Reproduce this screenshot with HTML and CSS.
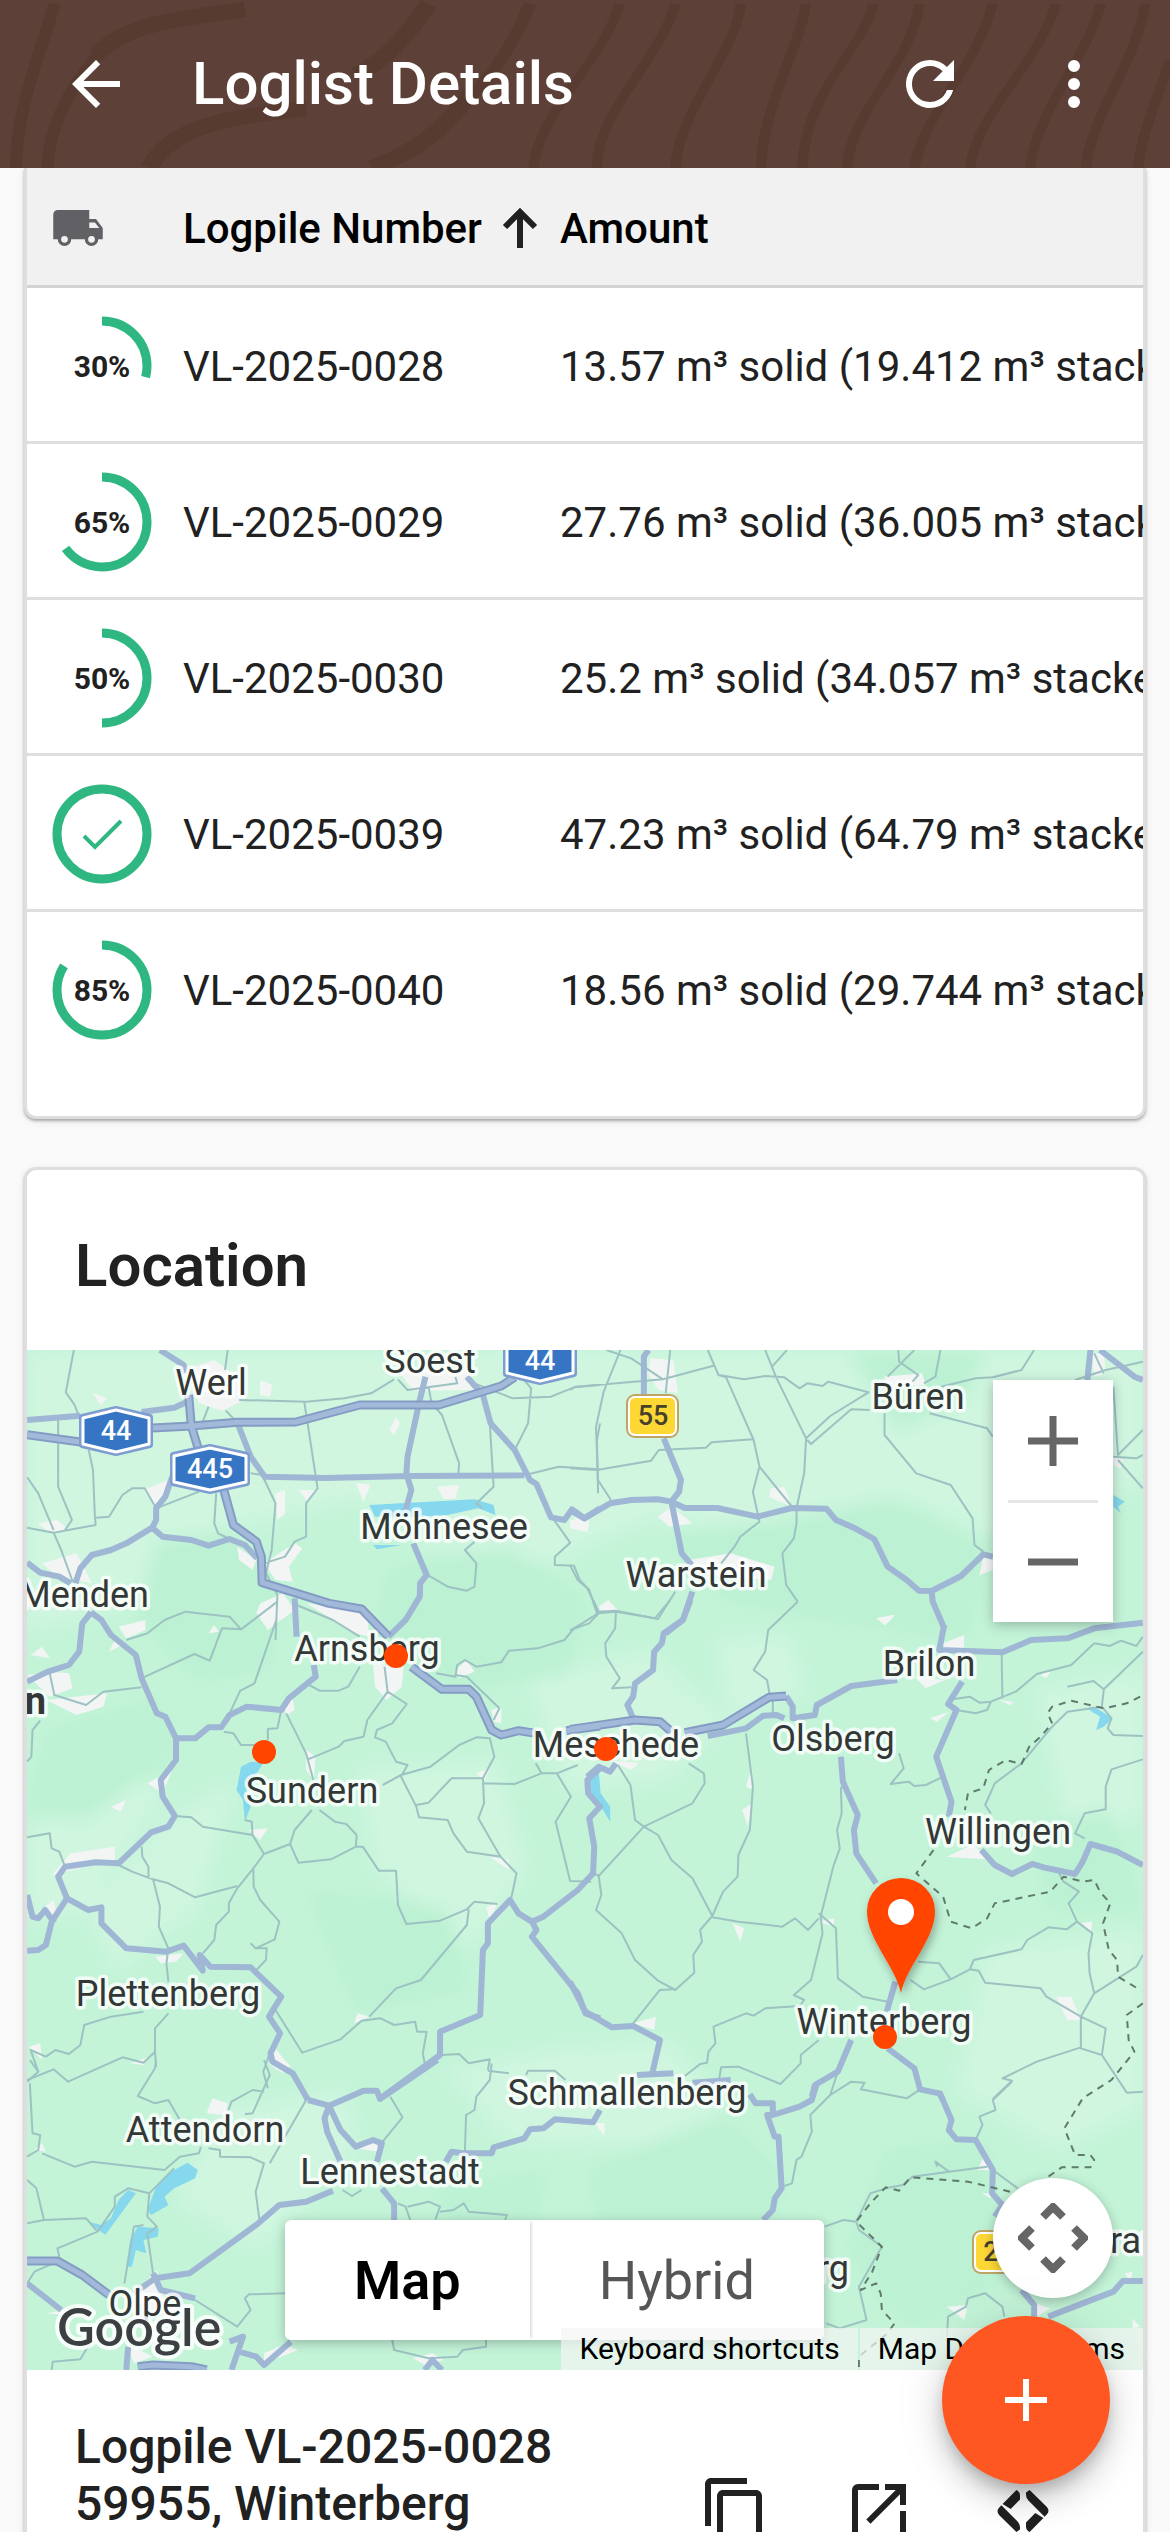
FILE: index.html
```html
<!DOCTYPE html>
<html lang="en">
<head>
<meta charset="utf-8">
<meta name="viewport" content="width=device-width, initial-scale=1">
<title>Loglist Details</title>
<link rel="stylesheet" href="styles.css">
</head>
<body>
<header class="topbar">
  <svg class="topbar-grain" viewBox="0 0 1170 168" preserveAspectRatio="xMidYMid slice" aria-hidden="true">
    <g transform="scale(.3827 .3333)">
      <path class="medium" d="M142 12C110 150 42 320 42 504"/>
      <path class="medium" d="M290 130C190 230 128 380 124 504"/>
      <path class="wide" d="M640 28C500 55 340 60 250 165"/>
      <path class="wide" d="M1120 12C1060 110 1010 180 930 225"/>
      <path class="wide" d="M800 325C620 350 450 370 390 504"/>
      <path class="wide" d="M1230 280C1160 390 1080 460 970 504"/>
      <path class="medium" d="M1385 12C1350 110 1300 210 1230 290"/>
    </g>
    <g transform="scale(.7462 .3333)">
      <path d="M830 12C810 180 720 340 715 504M905 12C880 200 800 330 800 504M993 12C985 160 910 330 905 504M1080 12C1075 120 1020 330 1020 504M1170 12C1160 140 1080 260 1075 504M1232 12C1220 200 1140 330 1135 504M1330 12C1310 200 1240 330 1225 504M1415 12C1390 200 1310 330 1300 504M1475 12C1460 160 1390 330 1380 504M1535 12C1520 200 1465 330 1455 504M1568 180C1550 300 1530 400 1525 504"/>
    </g>
  </svg>
  <button class="icon-button" type="button" aria-label="Back"><svg viewBox="0 0 24 24"><path d="M20 11H7.83l5.59-5.59L12 4l-8 8 8 8 1.41-1.41L7.83 13H20v-2z"/></svg></button>
  <h1>Loglist Details</h1>
  <div class="topbar-actions">
    <button class="icon-button" type="button" aria-label="Refresh"><svg viewBox="0 0 24 24"><path d="M17.65 6.35A7.96 7.96 0 0 0 12 4a8 8 0 1 0 7.73 10h-2.08A6 6 0 1 1 12 6c1.66 0 3.14.69 4.22 1.78L13 11h7V4l-2.35 2.35z"/></svg></button>
    <button class="icon-button" type="button" aria-label="More"><svg viewBox="0 0 24 24"><path d="M12 8a2 2 0 1 0 0-4 2 2 0 0 0 0 4zm0 2a2 2 0 1 0 0 4 2 2 0 0 0 0-4zm0 6a2 2 0 1 0 0 4 2 2 0 0 0 0-4z"/></svg></button>
  </div>
</header>

<main class="content">
  <section class="card card-table">
    <table>
      <thead>
        <tr>
          <th class="col-state" aria-label="Transport"><svg class="truck" viewBox="0 0 24 24"><path d="M20 8h-3V4H3c-1.100 0-2 .9-2 2v11h2a3 3 0 0 0 6 0h6a3 3 0 0 0 6 0h2v-5l-3-4zM6 18.500a1.500 1.500 0 1 1 0-3 1.500 1.500 0 0 1 0 3zm13.500-9 1.960 2.500H17V9.500h2.500zm-1.500 9a1.500 1.500 0 1 1 0-3 1.500 1.500 0 0 1 0 3z"/></svg></th>
          <th class="col-number"><span class="sorted">Logpile Number <svg class="sort" viewBox="0 0 36 40"><path d="M18 40V4M3 19 18 4l15 15"/></svg></span></th>
          <th>Amount</th>
        </tr>
      </thead>
      <tbody>
        <tr><td><div class="ring"><svg viewBox="0 0 102 102"><circle cx="51" cy="51" r="45" pathLength="100" stroke-dasharray="29 100"/></svg><span>30%</span></div></td><td>VL-2025-0028</td><td>13.57 m³ solid (19.412 m³ stacked)</td></tr>
        <tr><td><div class="ring"><svg viewBox="0 0 102 102"><circle cx="51" cy="51" r="45" pathLength="100" stroke-dasharray="65 100"/></svg><span>65%</span></div></td><td>VL-2025-0029</td><td>27.76 m³ solid (36.005 m³ stacked)</td></tr>
        <tr><td><div class="ring"><svg viewBox="0 0 102 102"><circle cx="51" cy="51" r="45" pathLength="100" stroke-dasharray="50 100"/></svg><span>50%</span></div></td><td>VL-2025-0030</td><td>25.2 m³ solid (34.057 m³ stacked)</td></tr>
        <tr><td><div class="ring"><svg viewBox="0 0 102 102" role="img" aria-label="Complete"><circle cx="51" cy="51" r="45"/><path d="M33 53 44 64 70 38"/></svg></div></td><td>VL-2025-0039</td><td>47.23 m³ solid (64.79 m³ stacked)</td></tr>
        <tr><td><div class="ring"><svg viewBox="0 0 102 102"><circle cx="51" cy="51" r="45" pathLength="100" stroke-dasharray="84 100"/></svg><span>85%</span></div></td><td>VL-2025-0040</td><td>18.56 m³ solid (29.744 m³ stacked)</td></tr>
      </tbody>
    </table>
  </section>

  <section class="card">
    <h2>Location</h2>
    <div class="map">
      <svg class="map-canvas" viewBox="0 0 1116 1020" preserveAspectRatio="xMidYMid slice" role="img" aria-label="Map of the Sauerland region">
        <defs>
          <filter id="soft" x="-10%" y="-10%" width="120%" height="120%"><feGaussianBlur stdDeviation="9"/></filter>
          <filter id="drop" x="-30%" y="-30%" width="160%" height="160%"><feDropShadow dx="2" dy="5" stdDeviation="5" flood-opacity=".3"/></filter>
        </defs>
        <rect class="land" width="1116" height="1020"/>
        <g class="light">
          <path d="M0 0H1116V130L1000 200L880 150L780 190L620 170L520 215L400 200L330 150L190 180L140 250L0 280Z"/>
          <path d="M500 330L620 300L700 370L640 430L540 440Z"/><path d="M690 290L760 285L780 340L700 370Z"/>
          <path d="M60 560L140 470L210 430L170 560L90 620Z"/><path d="M0 480L90 420L140 440L60 560L0 570Z"/>
          <path d="M960 600L1116 580V760L1030 800L930 740Z"/><path d="M420 720L520 700L640 690L700 760L620 800L480 790Z"/>
          <path d="M330 420L470 410L500 520L440 600L350 520Z"/><path d="M190 760L320 740L330 800L230 900L150 850Z"/>
          <path d="M1010 340L1116 320V470L1040 480Z"/>
        </g>
        <g class="dark">
          <path d="M130 190L200 185L260 240L240 320L170 330L110 270Z"/><path d="M360 220L480 200L560 250L540 320L430 340L350 290Z"/>
          <path d="M640 190L860 150L960 200L940 290L800 270L700 250Z"/><path d="M820 0H960L940 50L870 80Z"/>
          <path d="M20 380L130 350L150 400L60 470L0 460Z"/><path d="M560 820L700 770L760 830L720 930L580 900Z"/>
          <path d="M860 800L960 790L980 930L880 980L820 900Z"/><path d="M410 840L520 820L500 900L420 890Z"/>
          <path d="M280 540L420 560L440 640L330 660Z"/><path d="M1010 480L1080 460L1116 560L1020 560Z"/>
        </g>

        <g class="town">
          <g transform="translate(-27 -210) scale(.38265 .33333)">
            <path d="M480 690L560 660L630 720L640 780L580 812L520 790ZM1040 690L1220 690L1240 750L1080 752ZM243 760L280 775L262 795ZM680 720L712 735L705 770L680 765ZM1035 830L1045 850L1030 885L1018 870ZM930 1028L968 1035L950 1085ZM1142 1040L1200 1035L1190 1075L1160 1078ZM720 1060L745 1050L745 1120L725 1140ZM780 1050L830 1050L805 1085ZM375 1050L440 1020L435 1070L400 1095ZM100 1150L150 1140L180 1170L130 1180ZM110 1270L200 1240L240 1330L150 1310ZM690 1270L770 1210L790 1225L755 1280L765 1325L720 1320ZM620 1220L670 1260L660 1290L625 1260ZM680 1390L740 1360L770 1410L700 1470L670 1420ZM800 1390L960 1420L965 1490L930 1480ZM310 1460L380 1440L380 1470L330 1495ZM1490 1140L1540 1140L1530 1175L1490 1165Z"/>
          </g>
          <g transform="translate(543 -210) scale(.38265 .33333)">
            <path d="M210 655L270 660L282 760L230 750L205 700ZM820 710L920 700L930 735L830 740ZM525 1045L560 1040L580 1100L520 1070ZM230 1130L265 1100L320 1150L260 1160ZM310 1260L420 1240L535 1280L525 1320L320 1300ZM75 1400L100 1380L120 1410L90 1420ZM805 1435L850 1425L825 1455ZM1080 1250L1105 1260L1105 1290L1070 1305ZM1420 945L1445 960L1440 985L1420 975ZM1365 640L1395 640L1400 700L1370 710ZM0 1160L20 1120L50 1150L45 1175Z"/>
          </g>
          <g transform="translate(-27 250) scale(.38265 .33333)">
            <path d="M71 225L130 215L180 220L190 265L130 290ZM120 300L280 280L270 320L200 345ZM80 165L110 140L130 175ZM285 155L300 120L330 130ZM545 100L560 75L572 95ZM975 190L1055 200L1050 260L1010 300L980 260ZM740 320L765 295L770 330L750 345ZM385 550L450 510L425 580ZM290 620L330 600L315 635ZM185 760L300 740L300 780L135 825ZM100 935L140 900L150 950ZM650 690L700 685L680 720ZM800 450L825 470L820 540L800 510ZM1190 210L1220 180L1240 215L1200 235ZM1285 330L1310 320L1310 370L1290 365ZM1245 520L1280 505L1265 545ZM1280 770L1330 780L1330 810ZM405 1070L480 1060L460 1085L420 1090ZM925 1270L935 1240L965 1250ZM340 1390L390 1370L375 1395ZM715 1340L760 1400L720 1410ZM75 1340L105 1330L110 1380ZM1270 920L1300 910L1280 960Z"/>
          </g>
          <g transform="translate(543 250) scale(.38265 .33333)">
            <path d="M975 130L1030 105L1030 150L980 150ZM900 230L980 240L930 265ZM1230 225L1260 205L1245 235ZM940 355L990 335L960 365ZM1120 300L1160 305L1150 315ZM460 560L475 500L480 570ZM450 630L475 610L465 680ZM985 770L1050 735L1110 780ZM425 970L455 985L445 1025ZM650 965L690 955L690 980ZM1270 1190L1310 1190L1335 1260L1300 1260ZM165 1270L225 1250L220 1290ZM100 480L180 490L160 510ZM800 55L845 45L822 75ZM75 30L100 0L125 30ZM1330 970L1365 965L1360 1000Z"/>
          </g>
          <g transform="translate(-27 710) scale(.38265 .33333)">
            <path d="M540 160L555 115L595 130L590 165ZM90 270L110 250L120 275ZM930 265L980 240L990 275ZM350 700L410 630L430 720L470 750L390 770ZM330 850L400 890L350 910ZM690 880L740 855L780 870L690 910ZM1080 895L1130 880L1160 900L1110 915ZM700 10L745 10L740 40ZM120 760L200 745L240 770Z"/>
          </g>
          <g transform="translate(543 710) scale(.38265 .33333)">
            <path d="M65 190L90 190L90 228ZM1065 330L1085 280L1105 330ZM985 740L1040 735L1030 780ZM1215 730L1255 745L1220 770ZM1450 640L1470 635L1465 665ZM1470 775L1490 800L1470 805ZM1075 400L1105 400L1100 415Z"/>
          </g>
        </g>

        <g class="water">
          <path transform="translate(-27 -210) scale(.38265 .33333)" d="M965 1095L1240 1078L1290 1095L1295 1125L1250 1105L1170 1125L1110 1130L980 1130ZM975 1215L1050 1215L985 1228Z"/>
          <path transform="translate(543 -210) scale(.38265 .33333)" d="M1420 1065L1450 1085L1432 1100L1440 1120L1420 1100Z"/>
          <path transform="translate(-27 250) scale(.38265 .33333)" d="M690 485L665 530L640 580L655 620L640 665L635 600L618 570L630 500L655 485Z"/>
          <path transform="translate(543 250) scale(.38265 .33333)" d="M75 510L80 580L105 620L105 665L70 600L45 560L55 520ZM1370 320L1418 355L1395 380L1375 390L1385 350L1350 325Z"/>
          <path transform="translate(-27 710) scale(.38265 .33333)" d="M490 308L517 330L510 355L455 385L430 410L440 435L395 465L385 450L410 375L440 340ZM335 390L355 400L275 525L230 485L265 495L290 475L310 420ZM360 500L415 505L412 530L375 540L382 580L355 570L345 620L330 620L340 540Z"/>
        </g>

        <g class="minor">
          <path transform="translate(-27 -210) scale(.38265 .33333)" d="M193 630L172 757L195 795L205 825M232 930L243 990L248 1130M152 840L152 1040L188 1140L170 1170M71 1012L100 1060L140 1170M250 1133L285 1130L320 1065L345 1045L378 1045L408 1105M71 1163L140 1178L250 1155L248 1130M140 1178L160 1230L190 1325M595 630L588 690M530 845L545 800M590 812L620 847M625 780L800 785L900 775L970 760L1030 718M795 785L830 1045L800 1090L800 1190L770 1205L745 1250L690 1270M565 1060L560 1150L570 1180L600 1197M408 1105L520 1055M655 1000L685 1005L720 1090L710 1230L695 1300L725 1365M1120 740L1128 790L1155 825L1200 970L1197 1010M1040 718L1065 750L1195 730L1190 710M1280 850L1290 1040L1245 1090L1260 1105M1240 730L1340 775L1440 770L1500 742L1568 735M1370 720L1388 745L1380 850L1345 930M1370 1006L1460 980L1568 988M1568 850L1560 900L1563 1060M1445 1135L1490 1208L1450 1250L1450 1275L1500 1277L1515 1320L1540 1350L1560 1420M1240 1205L1215 1230L1245 1270L1240 1340L1220 1352L1170 1340L1118 1305M725 1365L720 1500M775 1395L870 1440L940 1490"/>
          <path transform="translate(543 -210) scale(.38265 .33333)" d="M132 630L88 755L68 860L73 1020L107 1080M0 750L15 740L243 718L375 677M95 630L160 655L243 718M262 630L250 760M360 630L388 705L408 712L480 900L495 980L583 1104M388 705L455 718L510 708L560 712L600 745L620 730L660 738L675 725L780 757L680 828L617 895M510 630L540 715L617 895L612 1000L592 1104L592 1150L585 1195L555 1240L565 1335L595 1385M567 630L528 680M783 810L735 808L630 912L620 900M0 985L70 990L212 962L232 930L355 923L370 907L478 898M495 980L478 1055L495 1145L445 1190L430 1220L395 1270M275 1355L230 1437L120 1412L75 1415L45 1345L20 1320L0 1275M822 820L822 885L905 1000L995 1035L1052 1135L1057 1215L1080 1235M940 820L1090 865L1105 890M858 630L860 665L910 705L895 725M900 630L830 710M968 630L955 710L925 730M970 740L1060 715L1105 712L1180 690L1213 630M1420 740L1432 945L1497 870M1420 950L1480 955L1497 945M1432 960L1497 1045M1320 720L1400 690L1497 665M1370 640L1395 700"/>
          <path transform="translate(-27 250) scale(.38265 .33333)" d="M330 120L385 100L430 60L485 35L600 50L630 88L725 5M630 88L580 85L548 182L508 162L375 232M722 60L665 250L628 272L600 340M130 220L142 285L225 315L270 275L370 262M71 485L82 470L85 390L105 362M585 395L610 400L630 435L690 435M735 330L725 385L700 387L700 420M748 340L800 460L820 545M805 478L885 440L900 423L950 410L960 360L1013 275L1063 312L1025 370L985 390L980 412L1008 425L1035 485L1065 495L1048 530L1088 620L1095 652L1170 660L1185 700L1220 755L1310 770M1013 275L1005 200M940 200L910 260L885 272L835 272L808 255M1000 555L1048 525L1125 500L1200 435L1245 412L1280 415L1292 470L1262 535L1265 610L1250 655L1308 770L1350 820L1335 900M1088 615L1120 608L1180 535L1262 535M1262 550L1345 552L1415 520L1455 520L1510 495M1400 490L1415 520M1455 520L1492 590L1452 665L1490 843L1545 845M1140 220L1190 230L1195 195L1215 180L1245 200L1310 187L1330 152L1405 145L1475 120L1500 85L1563 40L1550 0M1190 225L1220 230L1305 325L1290 360M457 648L500 652L530 680L660 705M640 660L658 665L660 705L690 762L758 732L770 690L815 630M835 630L875 665L905 672L932 705L930 740L865 778L780 788L758 732M930 740L948 740L990 812L1035 812L1040 915L1062 972L1150 962L1220 928L1240 905L1300 912M1225 928L1220 975L1100 1140L1035 1165L965 1250M690 762L662 805L663 860L680 900L730 965L718 1018L668 1045L655 1030M662 805L620 865L598 910L598 935L565 975L560 1020L530 1060M310 795L345 815L400 838L440 850L510 892L620 858M370 740L372 770L388 800L388 835M400 838L418 920L415 980L440 1045L435 1090L440 1145M71 712L130 700L135 745L155 755L170 800M668 1045L697 1045L695 1080L670 1110M720 1230L790 1358L890 1318L945 1262L995 1255L1030 1275L1085 1265L1090 1295L1115 1295L1105 1360L1110 1390M1155 1365L1200 1362L1225 1390L1280 1378L1275 1410M1275 1412L1330 1420M375 1235L290 1250L220 1275L210 1335L180 1362L145 1350L120 1370L80 1350L100 1415M440 1240L405 1285L405 1355L375 1388L320 1372L178 1445L140 1408L71 1440M405 1355L408 1400M705 1360L688 1415L700 1465"/>
          <path transform="translate(543 250) scale(.38265 .33333)" d="M595 5L518 90L510 155L480 210L515 240L522 285M530 300L530 345M75 40L120 35L222 55L262 0M75 40L60 0M0 90L50 70L75 40M120 35L118 85L92 130L95 170L130 235L110 265L160 262M125 495L158 555L170 660L193 680L320 610L352 550L350 520L310 490M193 680L75 828L82 885L68 930L135 1000L170 1080L230 1142L275 1170L325 1118L322 1065L345 1025L340 990L372 948L400 875L438 830L440 765L470 690L478 560L460 400M193 680L230 705L265 780L320 835L372 948M62 820L75 828M372 952L440 965L555 980L588 955L622 990L650 955M708 560L710 640L698 690L705 745L688 800L655 950L660 1000L630 1140L585 1185L612 1200L600 1218L510 1225L480 1247L460 1240L375 1280L380 1330L362 1355L358 1388L340 1392L300 1428M650 940L695 985L700 1135L765 1190L830 1205M270 1168L235 1170L165 1270M390 1435L395 1402L440 1400L550 1452L603 1390L603 1365L650 1320M860 460L872 505L838 552L885 545L900 558L930 555L975 530M1000 298L1045 290L1070 308L1100 305L1165 275L1220 222L1310 195L1370 130L1410 138L1440 122L1480 138L1497 110M1128 160L1130 295M1010 330L1060 340L1090 330L1100 305M1300 260L1368 243L1395 268L1497 155M1395 268L1390 320L1415 355L1405 385L1420 405L1497 408M1390 320L1300 335L1260 380L1180 490L1110 550L1085 615L1100 640M1497 478L1415 508L1400 560L1400 628L1345 640L1320 700L1345 715M1278 820L1290 845L1330 875L1303 910L1325 965L1365 1000L1355 1060L1358 1120L1370 1180L1335 1250L1335 1345L1390 1365L1400 1285L1335 1250M1370 1180L1480 1100L1497 1065M1325 965L1298 988L1250 982L1195 1020L1180 1048L1055 1080L1045 1108L995 1138L925 1168L890 1140M910 1085L965 1090L995 1138M1045 1108L1068 1112L1085 1148L1230 1165L1245 1190L1335 1250M1335 1342L1220 1385L1130 1435L1155 1442L1105 1497M1390 1365L1455 1478L1497 1475"/>
          <path transform="translate(-27 710) scale(.38265 .33333)" d="M78 0L100 35L71 65M408 0L405 25L360 108L405 130L440 120L470 180M78 70L85 220L105 225L100 270L71 290M110 280L195 320L240 305L430 330L470 290L520 280L525 260M690 0L705 45L660 160L640 163M690 95L660 90L605 125L597 150M800 120L705 310M545 265L575 270L575 290L655 292L690 310L668 395L678 480M71 360L95 385L115 480L225 475L255 515L150 565L155 590M71 490L115 480M255 515L300 440L300 410L335 385L390 400L455 325M390 400L385 470L410 500L385 520L400 640M375 495L350 500L325 670M1020 110L1052 172L1000 245M1285 10L1280 60L1245 110L1240 150L1218 165L1215 275M1065 440L1120 425L1150 440L1138 478M1040 430L1060 440L1072 480M1150 455L1185 450L1212 430L1225 455L1325 465L1320 480M745 700L650 703L640 715L655 750L620 800L510 720M71 670L90 635L150 605M135 930L138 905L210 898L235 850M1025 840L1030 870L1120 895L1195 890L1210 870L1270 860L1270 840M895 390L920 408L945 390M1375 45L1380 32L1450 32L1478 60"/>
          <path transform="translate(543 710) scale(.38265 .33333)" d="M700 35L680 105L735 65L770 68L760 88L880 115L915 88M1155 65L1105 120L1112 150L1070 170L1078 195L1060 240M680 105L628 165L632 215L605 290L592 300L580 370L560 378M665 500L715 480L748 485L785 400L825 385L870 375L895 350L990 335L1090 320M990 335L955 305L960 320M1105 330L1170 385M748 485L755 510L815 560L755 680L775 780L705 805L670 790M985 830L988 770L1035 740L1040 715L1085 700L1130 740L1135 770"/>
        </g>

        <g class="major">
          <path transform="translate(-27 -210) scale(.38265 .33333)" d="M418 630L480 675L482 700M71 840L210 827M370 816L455 803L490 785M620 847L655 950L692 1010L850 1014L1070 1008L1370 1006M450 1010L432 1070L408 1105L408 1140L398 1163L330 1210L290 1230L240 1245L210 1285L197 1330M398 1163L425 1190L500 1200L545 1217L600 1197L640 1215L672 1255M71 1268L105 1298L155 1310L185 1330M770 1375L775 1490M1112 710L1095 790L1065 950L1062 1000L1075 1050L1060 1110M1080 1210L1115 1305L1098 1330L1097 1370L1060 1440L1015 1490M1220 710L1262 765L1282 850L1345 930L1385 1020L1402 1032L1440 1132L1475 1140L1495 1108L1528 1135L1568 1105"/>
          <path transform="translate(543 -210) scale(.38265 .33333)" d="M205 630L193 650L193 765M245 895L290 1020L285 1055L265 1085L230 1078L160 1080L105 1090L37 1135L0 1110M265 1085L300 1104L385 1104L490 1130L580 1104L670 1106L695 1140L745 1165L795 1197L830 1280L880 1320L912 1352L945 1353L1022 1308L1080 1243L1105 1250M265 1085L292 1240L318 1275M320 1355L295 1440L250 1480M945 1353L948 1385L978 1465M1360 630L1352 720M1385 630L1475 710L1497 720"/>
          <path transform="translate(-27 250) scale(.38265 .33333)" d="M238 37L215 70L207 155L180 195L125 215L71 245M238 37L265 60L290 105L355 165L370 235L410 340L432 350L460 415L460 480L420 540L425 590L457 648L440 680L395 697L310 790L250 787L170 800L152 830L175 895L135 965L120 1035L100 1050L71 1052M175 895L230 930L265 922L265 970L330 1045L435 1055L480 1037L530 1112L522 1065L550 1100L655 1102L735 1190L703 1250L732 1300L707 1360L712 1385L765 1420L805 1500M71 885L85 950L100 955L118 930L142 968M460 415L510 415L545 382L578 382L600 345L645 320L735 330L755 295L825 230L820 195M1568 505L1535 540L1537 580L1568 620L1540 655L1553 740L1550 820L1510 870L1420 950L1390 965L1355 940L1333 900L1275 970L1275 1030L1262 1050L1255 1245L1150 1295L1150 1365L1000 1490M1390 965L1402 990L1390 1010L1510 1180L1530 1240L1568 1255"/>
          <path transform="translate(543 250) scale(.38265 .33333)" d="M978 75L965 150L1130 157L1205 120L1300 115L1370 85L1497 68M315 0L295 60L245 100L240 130L220 155L217 210L170 250L165 290L150 315L165 355M360 408L460 385L505 347L540 345L560 355M565 288L582 320L582 355L640 345L645 315L735 258L855 240M1025 245L988 312L1010 330L957 470L997 605L990 650M708 470L713 545L752 645L742 690L748 760L800 850M1075 750L1110 795L1155 822L1208 792L1240 803L1320 822L1340 785L1360 732L1430 755L1497 795M850 1145L828 1235M735 1320L700 1415L640 1455L632 1490M830 1345L900 1405L915 1468L965 1480L975 1500M120 490L105 515L75 500L45 530M0 1145L40 1235L110 1282L165 1278L235 1320L215 1420M175 1425L270 1420"/>
          <path transform="translate(-27 710) scale(.38265 .33333)" d="M805 120L860 137L950 92L985 92L993 117L1143 0M860 137L848 175L855 215L890 305M860 137L890 210L930 260L975 240L998 250L985 305M870 392L800 425L730 435L675 490L495 640L405 655L350 700M71 670L160 750M400 640L420 690L510 715M335 860L330 930M605 930L635 830L600 845M625 875L670 890L690 915L760 845M998 385L1030 430L1030 480M1165 305L1180 275L1210 280L1285 280L1290 262L1370 235L1385 208L1420 205L1450 178L1550 187L1568 150M800 110L805 120M1110 930L1130 900L1155 930"/>
          <path transform="translate(543 710) scale(.38265 .33333)" d="M645 70L632 120L600 140L530 165L515 165L535 230L545 230L553 385L535 415L530 450L505 480M470 103L485 130L530 130L530 165M965 95L997 180L990 210L1010 238L1060 240L1105 330L1103 400L1130 435L1110 470M1180 690L1213 735L1213 770M1250 770L1420 695L1445 663L1497 663M320 68L420 60"/>
        </g>
        <g class="motorway">
          <path id="m1" transform="translate(-27 -210) scale(.38265 .33333)" d="M71 884L210 906M398 864L500 858L620 847L773 846L940 795L1147 795L1310 738L1345 712M493 765L500 858L518 925M585 1050L610 1155L670 1205L683 1250L685 1328L770 1358L860 1390L945 1407L1015 1490"/>
          <path id="m2" transform="translate(-27 250) scale(.38265 .33333)" d="M1075 200L1155 268L1225 268L1245 290L1285 390L1310 405L1355 392L1400 400M1480 392L1568 378"/>
          <path id="m3" transform="translate(543 250) scale(.38265 .33333)" d="M0 388L170 360L235 365L265 395M300 398L400 375L520 292L565 288"/>
          <path id="m4" transform="translate(-27 710) scale(.38265 .33333)" d="M71 603L150 603L215 645L285 705M360 920L400 915L500 920L540 930"/>
        </g>
        <g class="motorway-fill">
          <path transform="translate(-27 -210) scale(.38265 .33333)" d="M71 884L210 906M398 864L500 858L620 847L773 846L940 795L1147 795L1310 738L1345 712M493 765L500 858L518 925M585 1050L610 1155L670 1205L683 1250L685 1328L770 1358L860 1390L945 1407L1015 1490"/>
          <path transform="translate(-27 250) scale(.38265 .33333)" d="M1075 200L1155 268L1225 268L1245 290L1285 390L1310 405L1355 392L1400 400M1480 392L1568 378"/>
          <path transform="translate(543 250) scale(.38265 .33333)" d="M0 388L170 360L235 365L265 395M300 398L400 375L520 292L565 288"/>
          <path transform="translate(-27 710) scale(.38265 .33333)" d="M71 603L150 603L215 645L285 705M360 920L400 915L500 920L540 930"/>
        </g>
        <g class="border">
          <path transform="translate(543 250) scale(.38265 .33333)" d="M1490 290L1455 310L1395 325L1310 302L1260 320L1248 340L1260 370L1230 410L1200 440L1180 492L1140 480L1095 510L1080 565L1040 580L1032 630M950 750L905 820L975 890L995 965L1050 985L1090 955L1110 910L1255 875L1290 830L1340 845L1370 840L1385 875L1412 910L1393 970L1408 1050L1430 1080L1432 1130L1490 1170M1497 1210L1455 1245L1460 1320L1475 1355L1415 1440L1340 1495L1292 1585L1320 1665L1360 1665L1370 1680L1360 1702L1285 1702L1250 1730M1150 1775L1040 1745L890 1732L860 1772L825 1762L785 1810L748 1865L815 1940L790 2015L760 2070L800 2050L812 2080L815 2130L848 2170L830 2200L755 2270L755 2310"/>
        </g>

        <g class="shield">
          <path class="edge" d="M55 67 89 59 123 67V95L89 103 55 95Z"/><path class="edge" d="M146 105 183 97 220 105V133L183 141 146 133Z"/><path class="edge" d="M479-4 513-12 547-4V24L513 32 479 24Z"/>
          <path d="M56 68 89 60 122 68V94L89 102 56 94Z"/><path d="M147 106 183 98 219 106V132L183 140 147 132Z"/><path d="M480-3 513-11 546-3V23L513 31 480 23Z"/>
          <text x="89" y="90">44</text><text x="183" y="128">445</text><text x="513" y="20">44</text>
        </g>
        <g class="shield-federal">
          <rect class="edge" x="599" y="44" width="53" height="44" rx="9"/><rect x="602" y="47" width="47" height="38" rx="6"/><text x="626" y="75">55</text>
          <rect class="edge" x="945" y="880" width="53" height="44" rx="9"/><rect x="948" y="883" width="47" height="38" rx="6"/><text x="964" y="911">2</text>
        </g>
        <g class="labels">
          <text x="184" y="45">Werl</text><text x="403" y="23">Soest</text><text x="891" y="59">Büren</text><text x="417" y="189">Möhnesee</text>
          <text x="669" y="237">Warstein</text><text class="end" x="122" y="257">Menden</text><text x="340" y="311">Arnsberg</text>
          <text class="end city" x="19" y="364">n</text><text x="902" y="326">Brilon</text><text x="589" y="407">Meschede</text>
          <text x="806" y="401">Olsberg</text><text x="285" y="453">Sundern</text><text x="971" y="494">Willingen</text>
          <text x="141" y="656">Plettenberg</text><text x="857" y="684">Winterberg</text><text x="600" y="755">Schmallenberg</text>
          <text x="178" y="792">Attendorn</text><text x="363" y="834">Lennestadt</text><text x="118" y="966">Olpe</text>
          <text class="end" x="822" y="931">rg</text><text class="start" x="1083" y="903">ran</text>
        </g>
        <g class="markers">
          <circle cx="369" cy="306" r="12"/><circle cx="237" cy="402" r="12"/><circle cx="579" cy="399" r="12"/><circle cx="858" cy="687" r="12"/>
          <path filter="url(#drop)" d="M874 643C868 615 840 590 840 561A34 33 0 0 1 908 561C908 590 880 615 874 643Z"/>
          <circle class="hole" cx="874" cy="562" r="13"/>
        </g>
        <text class="logo" x="30" y="996">Google</text>
      </svg>

      <div class="zoom">
        <button type="button" aria-label="Zoom in"><svg viewBox="0 0 50 50"><path d="M0 25H50M25 0V50"/></svg></button>
        <button type="button" aria-label="Zoom out"><svg viewBox="0 0 50 50"><path d="M0 25H50"/></svg></button>
      </div>
      <button class="pan" type="button" aria-label="Map camera controls"><svg viewBox="0 0 70 70"><path d="M25 14 35 4 45 14M25 56 35 66 45 56M14 25 4 35 14 45M56 25 66 35 56 45"/></svg></button>
      <div class="map-type">
        <button class="active" type="button">Map</button>
        <button type="button">Hybrid</button>
      </div>
      <div class="attribution">
        <button type="button">Keyboard shortcuts</button>
        <p><span>Map Data</span><a href="#terms">Terms</a></p>
      </div>
    </div>
    <div class="place">
      <h3>Logpile VL-2025-0028<br>59955, Winterberg</h3>
      <div class="place-actions">
        <button type="button" aria-label="Copy"><svg viewBox="0 0 24 24"><path d="M16 1H4c-1.100 0-2 .9-2 2v14h2V3h12V1zm3 4H8c-1.100 0-2 .9-2 2v14c0 1.100.9 2 2 2h11c1.100 0 2-.9 2-2V7c0-1.100-.9-2-2-2zm0 16H8V7h11v14z"/></svg></button>
        <button type="button" aria-label="Open in maps"><svg viewBox="0 0 24 24"><path d="M19 19H5V5h7V3H5a2 2 0 0 0-2 2v14a2 2 0 0 0 2 2h14c1.100 0 2-.9 2-2v-7h-2v7zM14 3v2h3.590l-9.830 9.830 1.410 1.410L19 6.410V10h2V3h-7z"/></svg></button>
        <button type="button" aria-label="Directions"><svg viewBox="0 0 24 24"><path id="bracket" d="M9.800 5Q11 5.600 11 6.800V8.200L7.900 11.300 5.200 9.700ZM4.800 10.100 10.200 15.500Q11 16.400 11 17.300V18.200L9.800 19 4.100 13.400Q2.900 12 4.100 10.800Z"/><use href="#bracket" transform="rotate(180 12 12)"/></svg></button>
      </div>
    </div>
  </section>
</main>
<button class="fab" type="button" aria-label="Add"><svg viewBox="0 0 42 42"><path d="M0 21H42M21 0V42"/></svg></button>
</body>
</html>
```
FILE: styles.css
```css
* { box-sizing: border-box; }

body {
  margin: 0;
  height: 100vh;
  overflow: hidden;
  display: flex;
  flex-direction: column;
  background: #fafafa;
  color: #212121;
  font-family: Roboto, "Noto Sans", sans-serif;
  font-size: 42px;
}

button {
  margin: 0;
  padding: 0;
  border: 0;
  background: none;
  color: inherit;
  font: inherit;
  cursor: pointer;
}

svg { display: block; }
h1, h2, h3, p { margin: 0; font-weight: 500; }

/* Top bar */
.topbar {
  position: relative;
  flex: none;
  display: flex;
  align-items: center;
  gap: 60px;
  height: 168px;
  padding: 0 60px;
  background: #5d4037;
  color: #fff;
}
.topbar-grain { position: absolute; inset: 0; width: 100%; height: 100%; fill: none; stroke: #573b30; stroke-width: 14; }
.topbar-grain .wide { stroke-width: 46; }
.topbar-grain .medium { stroke-width: 32; }
.topbar h1 { position: relative; flex: 1; font-size: 60px; line-height: 72px; }
.topbar-actions { display: flex; gap: 72px; }
.icon-button { position: relative; }
.icon-button svg { width: 72px; height: 72px; fill: currentColor; }

/* Cards */
.content { flex: 1; min-height: 0; overflow: hidden; padding: 0 24px; }
.card {
  overflow: hidden;
  margin-bottom: 48px;
  border: 3px solid #dedede;
  border-radius: 12px;
  background: #fff;
  box-shadow: 0 2px 3px rgba(0, 0, 0, .3), 0 3px 12px rgba(0, 0, 0, .06);
}
.card-table { border-top: 0; border-top-left-radius: 0; border-top-right-radius: 0; padding-bottom: 48px; }
.card h2 { padding: 60px 48px 48px; font-size: 60px; font-weight: 600; line-height: 72px; }

/* Log pile table */
table { min-width: 100%; border-collapse: separate; border-spacing: 0; white-space: nowrap; }
th, td { padding: 3px 24px 0 0; border-bottom: 3px solid #dedede; text-align: left; }
th { height: 120px; border-color: #d3d3d3; background: #f1f1f1; color: #000; font-weight: 500; }
td { height: 156px; }
tr:last-child td { border-color: transparent; }
th:first-child, td:first-child { min-width: 156px; padding-left: 24px; }
.col-number { width: 377px; min-width: 377px; padding-right: 0; }
.truck { width: 54px; height: 54px; fill: #616165; }
.sorted { display: flex; align-items: center; gap: 20px; }
.sort { width: 36px; height: 40px; fill: none; stroke: #212121; stroke-width: 6; }
.ring { display: grid; place-items: center; width: 102px; height: 102px; }
.ring > * { grid-area: 1 / 1; }
.ring svg { width: 102px; height: 102px; fill: none; stroke: #2eb781; }
.ring circle { stroke-width: 9; transform: rotate(-90deg); transform-origin: center; }
.ring path { stroke-width: 4; }
.ring span { font-size: 30px; font-weight: 700; }

/* Map */
.map { position: relative; height: 1020px; overflow: hidden; }
.map-canvas { width: 100%; height: 100%; }
.map-canvas path { vector-effect: non-scaling-stroke; }
.land { fill: #c3f4d8; }
.light { fill: #d0f6e0; filter: url(#soft); }
.dark { fill: #bcf1d3; filter: url(#soft); }
.town { fill: #f2f5f4; }
.water { fill: #85d8ee; }
.minor, .major, .motorway, .motorway-fill, .border { fill: none; stroke-linejoin: round; }
.minor { stroke: #9dc2c2; stroke-width: 2; }
.major { stroke: #9fb6d4; stroke-width: 6; }
.motorway { stroke: #849cc4; stroke-width: 9; }
.motorway-fill { stroke: #a3b9da; stroke-width: 5; }
.border { stroke: #607a6c; stroke-width: 2; stroke-dasharray: 7 6; }
.shield path { fill: #3575c4; stroke: #fff; stroke-width: 3; stroke-linejoin: round; }
.shield .edge { stroke: #7f9ed0; stroke-width: 6; }
.shield text { fill: #fff; }
.shield text, .shield-federal text { font-size: 27px; font-weight: 500; text-anchor: middle; }
.shield-federal rect { fill: #fdd835; stroke: #fff; stroke-width: 2; }
.shield-federal .edge { fill: #c0a467; stroke: none; }
.shield-federal text { fill: #45412d; }
.labels { fill: #333837; stroke: #fff; stroke-opacity: .8; stroke-width: 7; stroke-linejoin: round; paint-order: stroke; font-size: 36px; text-anchor: middle; }
.labels .end { text-anchor: end; }
.labels .start { text-anchor: start; }
.labels .city { font-weight: 700; font-size: 38px; }
.markers { fill: #ff4500; }
.markers .hole { fill: #fff; }
.logo { fill: #3c4043; stroke: #fff; stroke-opacity: .85; stroke-width: 8; stroke-linejoin: round; paint-order: stroke; font: 600 52px Lato, sans-serif; }

.zoom, .pan, .map-type { position: absolute; background: #fff; box-shadow: 0 3px 12px rgba(0, 0, 0, .25); }
.zoom { top: 30px; right: 30px; display: grid; width: 120px; }
.zoom button { display: grid; place-items: center; height: 121px; }
.zoom button + button::before { content: ""; position: absolute; top: 120px; width: 90px; height: 3px; background: #e6e6e6; }
.zoom svg { width: 50px; height: 50px; fill: none; stroke: #666; stroke-width: 7; }
.pan { right: 30px; bottom: 72px; display: grid; place-items: center; width: 120px; height: 120px; border-radius: 50%; }
.pan svg { width: 70px; height: 70px; fill: none; stroke: #666; stroke-width: 8; }
.map-type { left: 258px; bottom: 30px; display: flex; height: 120px; border-radius: 6px; font-size: 54px; color: #565656; }
.map-type button { padding: 0 69px; }
.map-type .active { color: #000; font-weight: 600; box-shadow: 3px 0 3px -2px rgba(0, 0, 0, .2); }
.attribution { position: absolute; right: 0; bottom: 0; display: flex; gap: 2px; height: 42px; font-size: 30px; line-height: 42px; color: #000; }
.attribution > * { padding: 0 18px; background: rgba(245, 245, 245, .7); }
.attribution p { display: flex; gap: 34px; font-weight: 400; }
.attribution a { color: inherit; text-decoration: none; }

/* Selected place */
.place { display: flex; justify-content: space-between; align-items: flex-start; padding: 48px 84px 48px 48px; }
.place h3 { font-size: 48px; line-height: 57px; }
.place-actions { display: flex; gap: 72px; padding-top: 57px; }
.place-actions svg { width: 72px; height: 72px; fill: #212121; }

.fab {
  position: absolute;
  right: 60px;
  bottom: 48px;
  display: grid;
  place-items: center;
  width: 168px;
  height: 168px;
  border-radius: 50%;
  background: #ff5722;
  box-shadow: 0 9px 15px -3px rgba(0, 0, 0, .2), 0 18px 30px rgba(0, 0, 0, .14), 0 3px 54px rgba(0, 0, 0, .1);
}
.fab svg { width: 42px; height: 42px; stroke: #fff; stroke-width: 6; }
```
